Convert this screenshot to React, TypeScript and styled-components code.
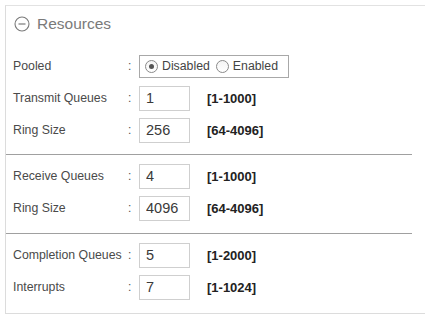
import styled, { createGlobalStyle } from "styled-components";

const GlobalStyle = createGlobalStyle`
  html, body {
    margin: 0;
    padding: 0;
    background: #ffffff;
    overflow: hidden;
  }
  body {
    width: 425px;
    font-family: "Liberation Sans", Arial, sans-serif;
  }
`;

interface FieldRow {
  label: string;
  value: string;
  range: string;
}

const sections: FieldRow[][] = [
  [
    { label: "Transmit Queues", value: "1", range: "[1-1000]" },
    { label: "Ring Size", value: "256", range: "[64-4096]" },
  ],
  [
    { label: "Receive Queues", value: "4", range: "[1-1000]" },
    { label: "Ring Size", value: "4096", range: "[64-4096]" },
  ],
  [
    { label: "Completion Queues", value: "5", range: "[1-2000]" },
    { label: "Interrupts", value: "7", range: "[1-1024]" },
  ],
];

const CollapseIcon = () => (
  <svg width="16" height="16" viewBox="0 0 16 16">
    <circle cx="8" cy="8" r="7" fill="none" stroke="#7a7a7a" strokeWidth="1.1" />
    <line x1="4.5" y1="8" x2="11.5" y2="8" stroke="#7a7a7a" strokeWidth="1.2" />
  </svg>
);

const Row = ({ label, value, range }: FieldRow) => (
  <FieldLine>
    <Label>{label}</Label>
    <Colon>:</Colon>
    <Control>
      <NumberInput value={value} readOnly />
      <Range>{range}</Range>
    </Control>
  </FieldLine>
);

const App = () => {
  return (
    <>
      <GlobalStyle />
      <Panel>
        <Header>
          <CollapseIcon />
          <Title>Resources</Title>
        </Header>
        {sections.map((rows, i) => (
          <Section key={i} $first={i === 0} $last={i === sections.length - 1}>
            {i === 0 && (
              <FieldLine>
                <Label>Pooled</Label>
                <Colon>:</Colon>
                <Control>
                  <RadioGroup>
                    <RadioOption>
                      <RadioCircle $checked />
                      Disabled
                    </RadioOption>
                    <RadioOption>
                      <RadioCircle />
                      Enabled
                    </RadioOption>
                  </RadioGroup>
                </Control>
              </FieldLine>
            )}
            {rows.map((row, j) => (
              <Row key={j} {...row} />
            ))}
          </Section>
        ))}
      </Panel>
    </>
  );
};

export default App;

const Panel = styled.div`
  margin: 5px 0 0 5px;
  width: 420px;
  box-sizing: border-box;
  border-top: 1px solid #e2e2e2;
  border-left: 1px solid #dcdcdc;
  border-bottom: 1px solid #dcdcdc;
`;

const Header = styled.div`
  display: flex;
  align-items: center;
  gap: 7px;
  height: 36px;
  padding-left: 8px;
`;

const Title = styled.span`
  font-size: 15.5px;
  color: #7a7a7a;
`;

const Section = styled.div<{ $first?: boolean; $last?: boolean }>`
  display: flex;
  flex-direction: column;
  margin-right: 13px;
  padding: ${({ $first }) => ($first ? "8px" : "5px")} 0
    ${({ $first, $last }) => ($last ? "10px" : $first ? "8px" : "9px")} 0;
  border-bottom: ${({ $last }) => ($last ? "none" : "1px solid #a0a0a0")};
`;

const FieldLine = styled.div`
  display: grid;
  grid-template-columns: 114px 12px 1fr;
  align-items: center;
  height: 32px;
  padding-left: 7px;
`;

const Label = styled.span`
  font-size: 12.3px;
  color: #4a4a4a;
  white-space: nowrap;
`;

const Colon = styled.span`
  font-size: 12px;
  color: #555555;
  padding-left: 1px;
`;

const Control = styled.div`
  display: flex;
  align-items: center;
`;

const NumberInput = styled.input`
  box-sizing: border-box;
  width: 51px;
  height: 25px;
  margin: 0;
  padding: 0 0 0 6px;
  border: 1px solid #cfcfcf;
  border-radius: 0;
  font-family: "Liberation Sans", Arial, sans-serif;
  font-size: 14.5px;
  color: #3a3a3a;
  outline: none;
`;

const Range = styled.span`
  margin-left: 17px;
  font-size: 13px;
  font-weight: bold;
  color: #222222;
`;

const RadioGroup = styled.div`
  box-sizing: border-box;
  display: flex;
  align-items: center;
  gap: 6px;
  width: 150px;
  height: 23px;
  padding-left: 5px;
  border: 1px solid #a8a8a8;
`;

const RadioOption = styled.label`
  display: flex;
  align-items: center;
  gap: 4px;
  font-size: 12.3px;
  color: #444444;
`;

const RadioCircle = styled.span<{ $checked?: boolean }>`
  position: relative;
  box-sizing: border-box;
  width: 13px;
  height: 13px;
  border-radius: 50%;
  border: 1px solid #8a8a8a;
  background: linear-gradient(#f4f4f4, #ffffff);

  &::after {
    content: "";
    display: ${({ $checked }) => ($checked ? "block" : "none")};
    position: absolute;
    left: 3px;
    top: 3px;
    width: 5px;
    height: 5px;
    border-radius: 50%;
    background: #555555;
  }
`;
